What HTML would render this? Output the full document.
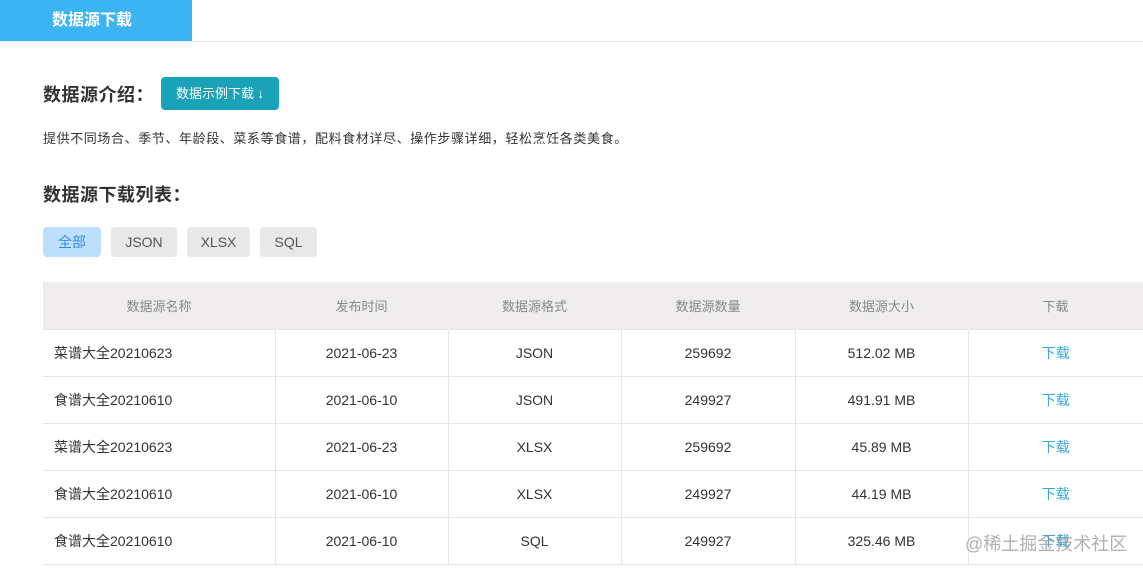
<!DOCTYPE html>
<html><head><meta charset="utf-8"><style>
*{margin:0;padding:0;box-sizing:border-box}
body{width:1143px;height:569px;overflow:hidden;background:#fff;font-family:"Liberation Sans","Noto Sans CJK SC",sans-serif;color:#333;position:relative}
.top{position:absolute;left:0;top:0;width:1143px;height:42px;border-bottom:1px solid #e6e6e6}
.tab{position:absolute;left:0;top:0;width:192px;height:41px;background:#3cb4f1;color:#fff;font-weight:bold;font-size:16px;line-height:41px;padding-left:52px}
.h{position:absolute;left:43px;font-size:18px;font-weight:bold;color:#333;letter-spacing:0.5px}
.btn{position:absolute;left:161px;top:77px;width:118px;height:33px;background:#1aa3b8;border-radius:4px;color:#fff;font-size:13px;line-height:33px;text-align:center}
.desc{position:absolute;left:43px;top:128px;font-size:13px;color:#333;letter-spacing:0.6px}
.f{position:absolute;top:227px;height:30px;border-radius:4px;background:#e8e8e8;color:#555;font-size:14px;line-height:30px;text-align:center}
table{position:absolute;left:43px;top:282px;width:1100px;border-collapse:collapse;font-size:14px}
th{background:#efeded;color:#888;font-weight:normal;height:47px;font-size:13px}
td{height:47px;border-top:1px solid #e6e6e6;border-right:1px solid #e6e6e6;text-align:center;color:#333}
td:last-child{border-right:none;color:#3aa8dd}
td:first-child{text-align:left;padding-left:11px}
tr:last-child td{border-bottom:1px solid #e6e6e6}
.wm{position:absolute;left:965px;top:530px;font-size:18px;color:rgba(150,150,150,.75)}
</style></head><body>
<div class="top"><div class="tab">数据源下载</div></div>
<div class="h" style="top:81px">数据源介绍：</div>
<div class="btn">数据示例下载 ↓</div>
<div class="desc">提供不同场合、季节、年龄段、菜系等食谱，配料食材详尽、操作步骤详细，轻松烹饪各类美食。</div>
<div class="h" style="top:181px">数据源下载列表：</div>
<div class="f" style="left:43px;width:58px;background:#bfe0fc;color:#2b8fe0">全部</div>
<div class="f" style="left:111px;width:66px">JSON</div>
<div class="f" style="left:187px;width:63px">XLSX</div>
<div class="f" style="left:260px;width:57px">SQL</div>
<table>
<colgroup><col style="width:232px"><col style="width:173px"><col style="width:173px"><col style="width:174px"><col style="width:173px"><col style="width:175px"></colgroup>
<tr><th>数据源名称</th><th>发布时间</th><th>数据源格式</th><th>数据源数量</th><th>数据源大小</th><th>下载</th></tr>
<tr><td>菜谱大全20210623</td><td>2021-06-23</td><td>JSON</td><td>259692</td><td>512.02 MB</td><td>下载</td></tr>
<tr><td>食谱大全20210610</td><td>2021-06-10</td><td>JSON</td><td>249927</td><td>491.91 MB</td><td>下载</td></tr>
<tr><td>菜谱大全20210623</td><td>2021-06-23</td><td>XLSX</td><td>259692</td><td>45.89 MB</td><td>下载</td></tr>
<tr><td>食谱大全20210610</td><td>2021-06-10</td><td>XLSX</td><td>249927</td><td>44.19 MB</td><td>下载</td></tr>
<tr><td>食谱大全20210610</td><td>2021-06-10</td><td>SQL</td><td>249927</td><td>325.46 MB</td><td>下载</td></tr>
</table>
<div class="wm">@稀土掘金技术社区</div>
</body></html>
